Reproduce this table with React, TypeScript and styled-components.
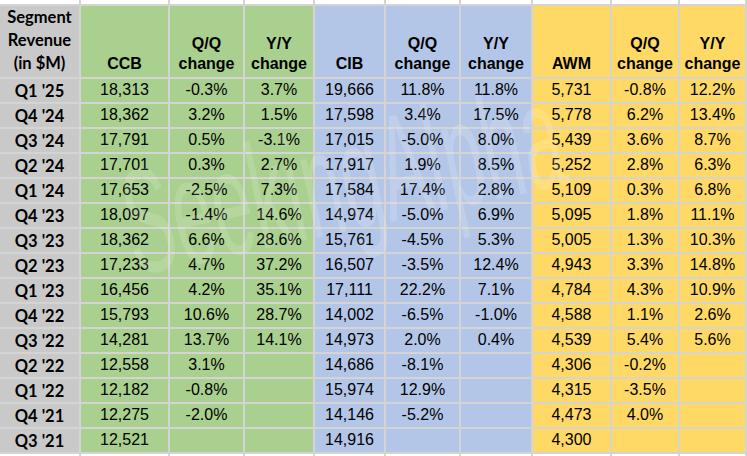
import styled, { createGlobalStyle } from 'styled-components';

type Tone = 'label' | 'green' | 'blue' | 'yellow';

const TONES: Record<Tone, string> = {
  label: '#c9c9c9',
  green: '#a9d08e',
  blue: '#b4c6e7',
  yellow: '#ffd966',
};

const COLUMN_TONES: Tone[] = ['label', 'green', 'green', 'green', 'blue', 'blue', 'blue', 'yellow', 'yellow', 'yellow'];

const HEADERS = ['Segment\nRevenue\n(in $M)', 'CCB', 'Q/Q\nchange', 'Y/Y\nchange', 'CIB', 'Q/Q\nchange', 'Y/Y\nchange', 'AWM', 'Q/Q\nchange', 'Y/Y\nchange'];

const ROWS: string[][] = [
  ["Q1 '25", '18,313', '-0.3%', '3.7%', '19,666', '11.8%', '11.8%', '5,731', '-0.8%', '12.2%'],
  ["Q4 '24", '18,362', '3.2%', '1.5%', '17,598', '3.4%', '17.5%', '5,778', '6.2%', '13.4%'],
  ["Q3 '24", '17,791', '0.5%', '-3.1%', '17,015', '-5.0%', '8.0%', '5,439', '3.6%', '8.7%'],
  ["Q2 '24", '17,701', '0.3%', '2.7%', '17,917', '1.9%', '8.5%', '5,252', '2.8%', '6.3%'],
  ["Q1 '24", '17,653', '-2.5%', '7.3%', '17,584', '17.4%', '2.8%', '5,109', '0.3%', '6.8%'],
  ["Q4 '23", '18,097', '-1.4%', '14.6%', '14,974', '-5.0%', '6.9%', '5,095', '1.8%', '11.1%'],
  ["Q3 '23", '18,362', '6.6%', '28.6%', '15,761', '-4.5%', '5.3%', '5,005', '1.3%', '10.3%'],
  ["Q2 '23", '17,233', '4.7%', '37.2%', '16,507', '-3.5%', '12.4%', '4,943', '3.3%', '14.8%'],
  ["Q1 '23", '16,456', '4.2%', '35.1%', '17,111', '22.2%', '7.1%', '4,784', '4.3%', '10.9%'],
  ["Q4 '22", '15,793', '10.6%', '28.7%', '14,002', '-6.5%', '-1.0%', '4,588', '1.1%', '2.6%'],
  ["Q3 '22", '14,281', '13.7%', '14.1%', '14,973', '2.0%', '0.4%', '4,539', '5.4%', '5.6%'],
  ["Q2 '22", '12,558', '3.1%', '', '14,686', '-8.1%', '', '4,306', '-0.2%', ''],
  ["Q1 '22", '12,182', '-0.8%', '', '15,974', '12.9%', '', '4,315', '-3.5%', ''],
  ["Q4 '21", '12,275', '-2.0%', '', '14,146', '-5.2%', '', '4,473', '4.0%', ''],
  ["Q3 '21", '12,521', '', '', '14,916', '', '', '4,300', '', ''],
];

const App = () => {
  return (
    <>
      <GlobalStyle />
      <SheetFrame>
        <Sheet>
          {COLUMN_TONES.map((_, idx) => (
            <EdgeCell key={'top' + idx} />
          ))}
          {HEADERS.map((text, idx) =>
            idx === 0 ? (
              <CornerCell key={'h' + idx}>{text}</CornerCell>
            ) : (
              <HeadCell key={'h' + idx} $tone={COLUMN_TONES[idx]}>
                {text}
              </HeadCell>
            ),
          )}
          {ROWS.map((row) =>
            row.map((value, idx) =>
              idx === 0 ? (
                <PeriodCell key={row[0] + idx}>{value}</PeriodCell>
              ) : (
                <ValueCell key={row[0] + idx} $tone={COLUMN_TONES[idx]}>
                  {value}
                </ValueCell>
              ),
            ),
          )}
          {COLUMN_TONES.map((_, idx) => (
            <EdgeCell key={'bottom' + idx} />
          ))}
        </Sheet>
        {/* faint diagonal site watermark laid over the sheet */}
        <Watermark aria-hidden>SeekingAlpha</Watermark>
      </SheetFrame>
    </>
  );
};

export default App;

const GlobalStyle = createGlobalStyle`
  html, body {
    margin: 0;
    padding: 0;
    background: #ffffff;
    overflow: hidden;
  }
`;

const SheetFrame = styled.div`
  position: relative;
  width: 747px;
  height: 456px;
  overflow: hidden;
`;

const Sheet = styled.div`
  display: grid;
  grid-template-columns: 79px 87px 73px 68px 69px 73px 70px 77px 66px 65px;
  grid-template-rows: 4px 71px repeat(15, 23px) 2px;
  column-gap: 2px;
  row-gap: 2px;
  width: 747px;
  height: 456px;

  background: #d4d4d4;
`;

const EdgeCell = styled.div`
  background: #ffffff;
`;

const CornerCell = styled.div`
  display: flex;
  align-items: flex-end;
  justify-content: center;
  padding-bottom: 2px;

  background: ${TONES.label};
  color: #000000;
  font-family: Lato, 'Liberation Sans', sans-serif;
  font-weight: 700;
  font-size: 16.5px;
  line-height: 23px;
  text-align: center;
  white-space: pre-line;
`;

const HeadCell = styled.div<{ $tone: Tone }>`
  display: flex;
  align-items: flex-end;
  justify-content: center;
  padding-bottom: 3px;

  background: ${({ $tone }) => TONES[$tone]};
  color: #000000;
  font-family: 'Liberation Sans', Arial, sans-serif;
  font-weight: 700;
  font-size: 16px;
  line-height: 20px;
  text-align: center;
  white-space: pre-line;
`;

const PeriodCell = styled.div`
  display: flex;
  align-items: center;
  justify-content: center;

  background: ${TONES.label};
  color: #000000;
  font-family: Lato, 'Liberation Sans', sans-serif;
  font-weight: 700;
  font-size: 16.5px;
  white-space: nowrap;
`;

const ValueCell = styled.div<{ $tone: Tone }>`
  display: flex;
  align-items: center;
  justify-content: center;
  padding-bottom: 1px;

  background: ${({ $tone }) => TONES[$tone]};
  color: #000000;
  font-family: 'Liberation Sans', Arial, sans-serif;
  font-size: 16px;
  white-space: nowrap;
`;

const Watermark = styled.div`
  position: absolute;
  left: 125px;
  top: 150px;

  color: rgba(255, 255, 255, 0.15);
  font-family: 'Liberation Sans', Arial, sans-serif;
  font-size: 150px;
  line-height: 1;
  white-space: nowrap;
  transform: rotate(-12deg) scaleX(0.48);
  transform-origin: left center;
  pointer-events: none;
`;
